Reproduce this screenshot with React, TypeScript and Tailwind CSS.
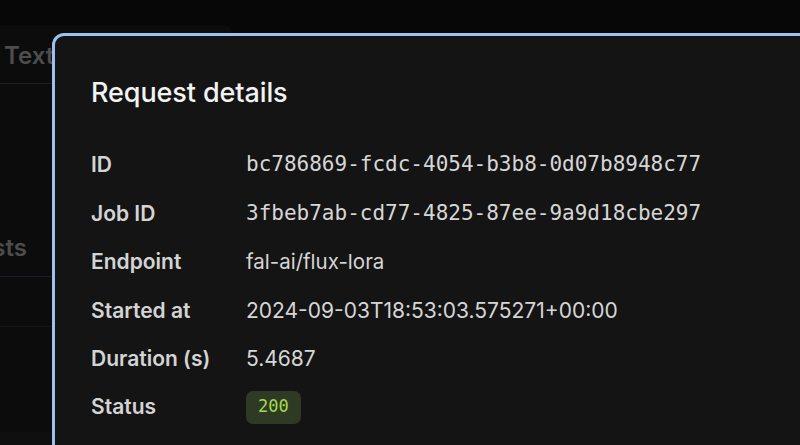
import React from "react";

const rows: { label: string; value: React.ReactNode }[] = [
  { label: "ID", value: <span className="font-['DejaVu_Sans_Mono',monospace] text-[21px]">bc786869-fcdc-4054-b3b8-0d07b8948c77</span> },
  { label: "Job ID", value: <span className="font-['DejaVu_Sans_Mono',monospace] text-[21px]">3fbeb7ab-cd77-4825-87ee-9a9d18cbe297</span> },
  { label: "Endpoint", value: <span className="text-[20.5px]">fal-ai/flux-lora</span> },
  { label: "Started at", value: <span className="text-[21px]">2024-09-03T18:53:03.575271+00:00</span> },
  { label: "Duration (s)", value: <span className="text-[21px]">5.4687</span> },
  {
    label: "Status",
    value: (
      <span className="inline-flex h-[33px] items-center rounded-[7px] bg-[#2f3a25] px-[12px] font-['DejaVu_Sans_Mono',monospace] text-[17px] text-[#a5d84c]">
        200
      </span>
    ),
  },
];

export default function App() {
  return (
    <div className="relative h-[445px] w-[800px] overflow-hidden bg-[#070707] font-['Inter',sans-serif]">
      {/* background panel */}
      <div className="absolute left-[-20px] top-[25px] flex h-[440px] w-[252px] flex-col rounded-lg bg-[#0c0c0c]">
        <div className="flex h-[59px] items-center border-b border-[#1e1e1e] pl-[24px] pt-[4px] text-[24px] font-semibold text-[#4d4d4d]">
          Text
        </div>
        <div className="h-[135px]" />
        <div className="flex h-[58px] items-center border-b border-[#1c1a2c] text-[24px] font-semibold text-[#4d4d4d]">
          <span className="w-[47px] overflow-hidden whitespace-nowrap text-right [direction:rtl]">sts</span>
        </div>
        <div className="h-[50px] border-b border-[#151515]" />
        <div className="h-[105px]" />
        <div className="h-[20px] bg-[#0f0f0f]" />
      </div>

      {/* dialog */}
      <div className="absolute left-[52px] top-[33px] h-[520px] w-[820px] rounded-[12px] border-[3px] border-[#9dc1ee] bg-[#141414] pl-[36px] pt-[41px] text-[#d8d8d8]">
        <h2 className="text-[27px] leading-[32px] font-medium tracking-[-0.1px] text-[#f2f2f2]">Request details</h2>
        <div className="mt-[32px] flex flex-col">
          {rows.map((r) => (
            <div key={r.label} className="flex h-[48.4px] items-center">
              <div className="w-[155px] text-[21px] font-semibold text-[#d4d4d4]">{r.label}</div>
              <div className="text-[#d6d6d6]">{r.value}</div>
            </div>
          ))}
        </div>
      </div>
    </div>
  );
}
